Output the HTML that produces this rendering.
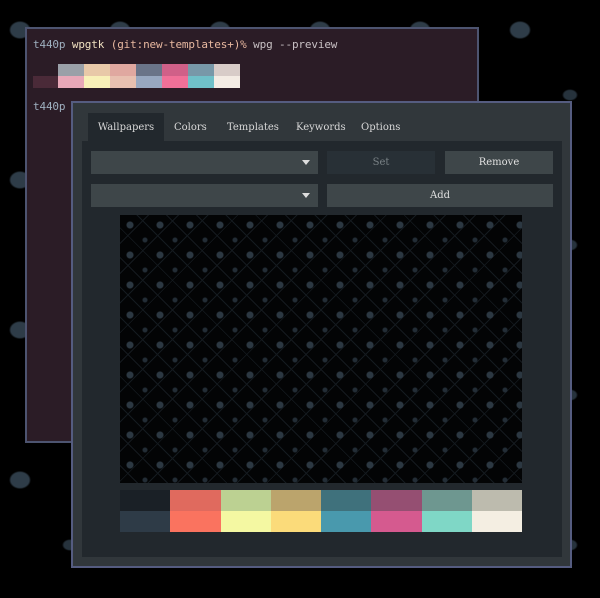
<!DOCTYPE html>
<html><head><style>
*{margin:0;padding:0;box-sizing:border-box}
body{width:600px;height:598px;overflow:hidden;background:#000;position:relative;font-family:"DejaVu Sans Mono","Liberation Mono",monospace}
.bg{position:absolute;inset:0;background:
radial-gradient(ellipse 12px 10px at 20px 30px,#2e3c48 0 9px,transparent 11px),
radial-gradient(ellipse 8px 6px at 70px 95px,#26323c 0 6px,transparent 8px);
background-size:100px 150px;}
.term{position:absolute;left:25px;top:27px;width:454px;height:416px;background:#2b1c26;border:2px solid #4d5470}
.t{position:absolute;font-size:11px;color:#c8c0c4;white-space:pre;letter-spacing:-0.15px}
.sw{position:absolute;width:26px;height:12px}
.dlg{position:absolute;left:71px;top:101px;width:501px;height:467px;background:#31373b;border:2px solid #555c80}
.tab{position:absolute;top:10px;height:30px;line-height:30px;font-size:10px;color:#d8d8d8;font-family:"DejaVu Serif","Liberation Serif",serif}
.nb{position:absolute;left:9px;top:38px;width:480px;height:416px;background:#22282d}
.btn{position:absolute;height:23px;background:#3e4649;color:#e0e0e0;font-size:10px;text-align:center;line-height:23px;font-family:"DejaVu Serif",serif}
.arr{position:absolute;right:8px;top:9px;width:0;height:0;border-left:4px solid transparent;border-right:4px solid transparent;border-top:5px solid #ddd}
.prev{position:absolute;left:38px;top:74px;width:402px;height:268px;background:
radial-gradient(circle at 10px 10px,#2c3842 0 3px,transparent 4px),
radial-gradient(circle at 25px 25px,#232d36 0 2px,transparent 3px),
repeating-linear-gradient(45deg,transparent 0 12px,#141a1f 12px 13px,transparent 13px 21px),
repeating-linear-gradient(-45deg,transparent 0 12px,#141a1f 12px 13px,transparent 13px 21px),#030405;
background-size:30px 30px,30px 30px,auto,auto}
.pal{position:absolute;left:38px;top:349px;width:402px;height:42px;display:grid;grid-template-columns:repeat(8,1fr);grid-template-rows:1fr 1fr}
</style></head><body>
<div class="bg"></div>
<div class="term">
<div class="t" style="left:6px;top:9px"><span style="color:#9fb0c0">t440p</span> <span style="color:#f0e0c0">wpgtk</span> <span style="color:#e8b8a0">(git:new-templates+)%</span> wpg --preview</div>
<div class="sw" style="left:6px;top:47px;background:#4a2a38;height:12px"></div>
<div class="sw" style="left:31px;top:35px;background:#9aa0a8"></div><div class="sw" style="left:31px;top:47px;background:#e8a8b8"></div>
<div class="sw" style="left:57px;top:35px;background:#e8c8a8"></div><div class="sw" style="left:57px;top:47px;background:#f8f0b8"></div>
<div class="sw" style="left:83px;top:35px;background:#e0a8a0"></div><div class="sw" style="left:83px;top:47px;background:#e8c0b0"></div>
<div class="sw" style="left:109px;top:35px;background:#6a7488"></div><div class="sw" style="left:109px;top:47px;background:#98a8c0"></div>
<div class="sw" style="left:135px;top:35px;background:#d06088"></div><div class="sw" style="left:135px;top:47px;background:#f07098"></div>
<div class="sw" style="left:161px;top:35px;background:#7898a8"></div><div class="sw" style="left:161px;top:47px;background:#70c0c8"></div>
<div class="sw" style="left:187px;top:35px;background:#d8ccc8"></div><div class="sw" style="left:187px;top:47px;background:#f4ece4"></div>
<div class="t" style="left:6px;top:71px;color:#9fb0c0">t440p</div>
</div>
<div class="dlg">
<div class="tab" style="left:15px;width:76px;background:#22282d;text-align:center">Wallpapers</div>
<div class="tab" style="left:101px">Colors</div>
<div class="tab" style="left:154px">Templates</div>
<div class="tab" style="left:223px">Keywords</div>
<div class="tab" style="left:288px">Options</div>
<div class="nb">
<div class="btn" style="left:9px;top:10px;width:227px"><div class="arr"></div></div>
<div class="btn" style="left:245px;top:10px;width:108px;background:#283036;color:#7a8286">Set</div>
<div class="btn" style="left:363px;top:10px;width:108px">Remove</div>
<div class="btn" style="left:9px;top:43px;width:227px"><div class="arr"></div></div>
<div class="btn" style="left:245px;top:43px;width:226px">Add</div>
<div class="prev"></div>
<div class="pal">
<div style="background:#1a2026"></div><div style="background:#e06a5e"></div><div style="background:#bcd192"></div><div style="background:#bba46c"></div><div style="background:#3f717c"></div><div style="background:#954f72"></div><div style="background:#6e9790"></div><div style="background:#bdbbae"></div>
<div style="background:#2e3b47"></div><div style="background:#fa735f"></div><div style="background:#f4f8a2"></div><div style="background:#fbdb7a"></div><div style="background:#4999ad"></div><div style="background:#d55a8f"></div><div style="background:#7fd7c6"></div><div style="background:#f4eee2"></div>
</div>
</div>
</div>
</body></html>
